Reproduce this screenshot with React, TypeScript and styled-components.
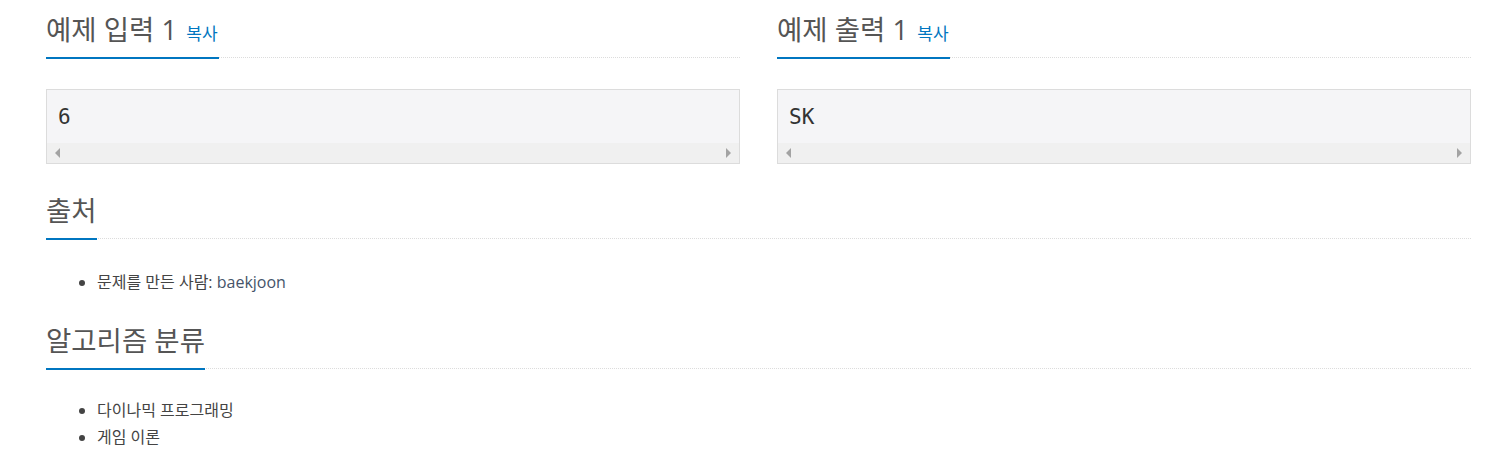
import React from "react";
import styled, { createGlobalStyle } from "styled-components";

const GlobalStyle = createGlobalStyle`
  html, body {
    margin: 0;
    padding: 0;
    background: #fff;
  }
  body {
    font-family: "Open Sans", "Noto Sans CJK KR", sans-serif;
    color: #444;
  }
`;

const Page = styled.div`
  padding: 15px 30px 0 46px;
`;

const Row = styled.div`
  display: grid;
  grid-template-columns: 1fr 1fr;
  column-gap: 37px;
`;

const Section = styled.section<{ $top?: number }>`
  margin-top: ${(p) => p.$top ?? 0}px;
`;

const Headline = styled.div`
  display: flex;
  align-items: flex-end;
  border-bottom: 1px dotted #dcdcdc;
`;

const Title = styled.h2`
  margin: 0 0 -2px 0;
  padding: 0 0 12px 0;
  font-size: 27.5px;
  line-height: 30px;
  font-weight: 400;
  color: #555;
  border-bottom: 2px solid #0076c0;
  white-space: nowrap;
`;

const CopyButton = styled.button`
  border: 0;
  background: none;
  padding: 0 1px 0 0;
  margin-left: 2px;
  font-family: "Open Sans", "Noto Sans CJK KR", sans-serif;
  font-size: 17px;
  color: #0076c0;
  cursor: pointer;
  vertical-align: baseline;
`;

const SampleBox = styled.div`
  margin-top: 31px;
  background: #f5f5f7;
  border: 1px solid #dcdcdc;
`;

const SampleData = styled.pre`
  margin: 0;
  padding: 14px 11px 13px;
  font-family: "DejaVu Sans Mono", monospace;
  font-size: 21px;
  line-height: 26px;
  color: #333;
  overflow: hidden;
`;

const ScrollTrack = styled.div`
  height: 20px;
  background: #f0f0f0;
  display: flex;
  align-items: center;
  justify-content: space-between;
  padding: 0 8px;
`;

const Arrow = styled.span<{ $dir: "left" | "right" }>`
  width: 0;
  height: 0;
  border-top: 5px solid transparent;
  border-bottom: 5px solid transparent;
  ${(p) =>
    p.$dir === "left"
      ? "border-right: 5px solid #a3a3a3;"
      : "border-left: 5px solid #a3a3a3;"}
`;

const List = styled.ul<{ $top: number }>`
  margin: ${(p) => p.$top}px 0 0 0;
  padding-left: 51px;
  font-size: 16px;
  line-height: 27px;
  color: #444;
`;

const UserLink = styled.a`
  color: #45546a;
  text-decoration: none;
`;

function Sample({ value }: { value: string }) {
  return (
    <SampleBox>
      <SampleData>{value}</SampleData>
      <ScrollTrack>
        <Arrow $dir="left" />
        <Arrow $dir="right" />
      </ScrollTrack>
    </SampleBox>
  );
}

export default function App() {
  return (
    <>
      <GlobalStyle />
      <Page>
        <Row>
          <Section>
            <Headline>
              <Title>
                예제 입력 1 <CopyButton type="button">복사</CopyButton>
              </Title>
            </Headline>
            <Sample value="6" />
          </Section>
          <Section>
            <Headline>
              <Title>
                예제 출력 1 <CopyButton type="button">복사</CopyButton>
              </Title>
            </Headline>
            <Sample value="SK" />
          </Section>
        </Row>
        <Section $top={32}>
          <Headline>
            <Title>출처</Title>
          </Headline>
          <List $top={30}>
            <li>
              문제를 만든 사람: <UserLink href="#">baekjoon</UserLink>
            </li>
          </List>
        </Section>
        <Section $top={30}>
          <Headline>
            <Title>알고리즘 분류</Title>
          </Headline>
          <List $top={28}>
            <li>다이나믹 프로그래밍</li>
            <li>게임 이론</li>
          </List>
        </Section>
      </Page>
    </>
  );
}
